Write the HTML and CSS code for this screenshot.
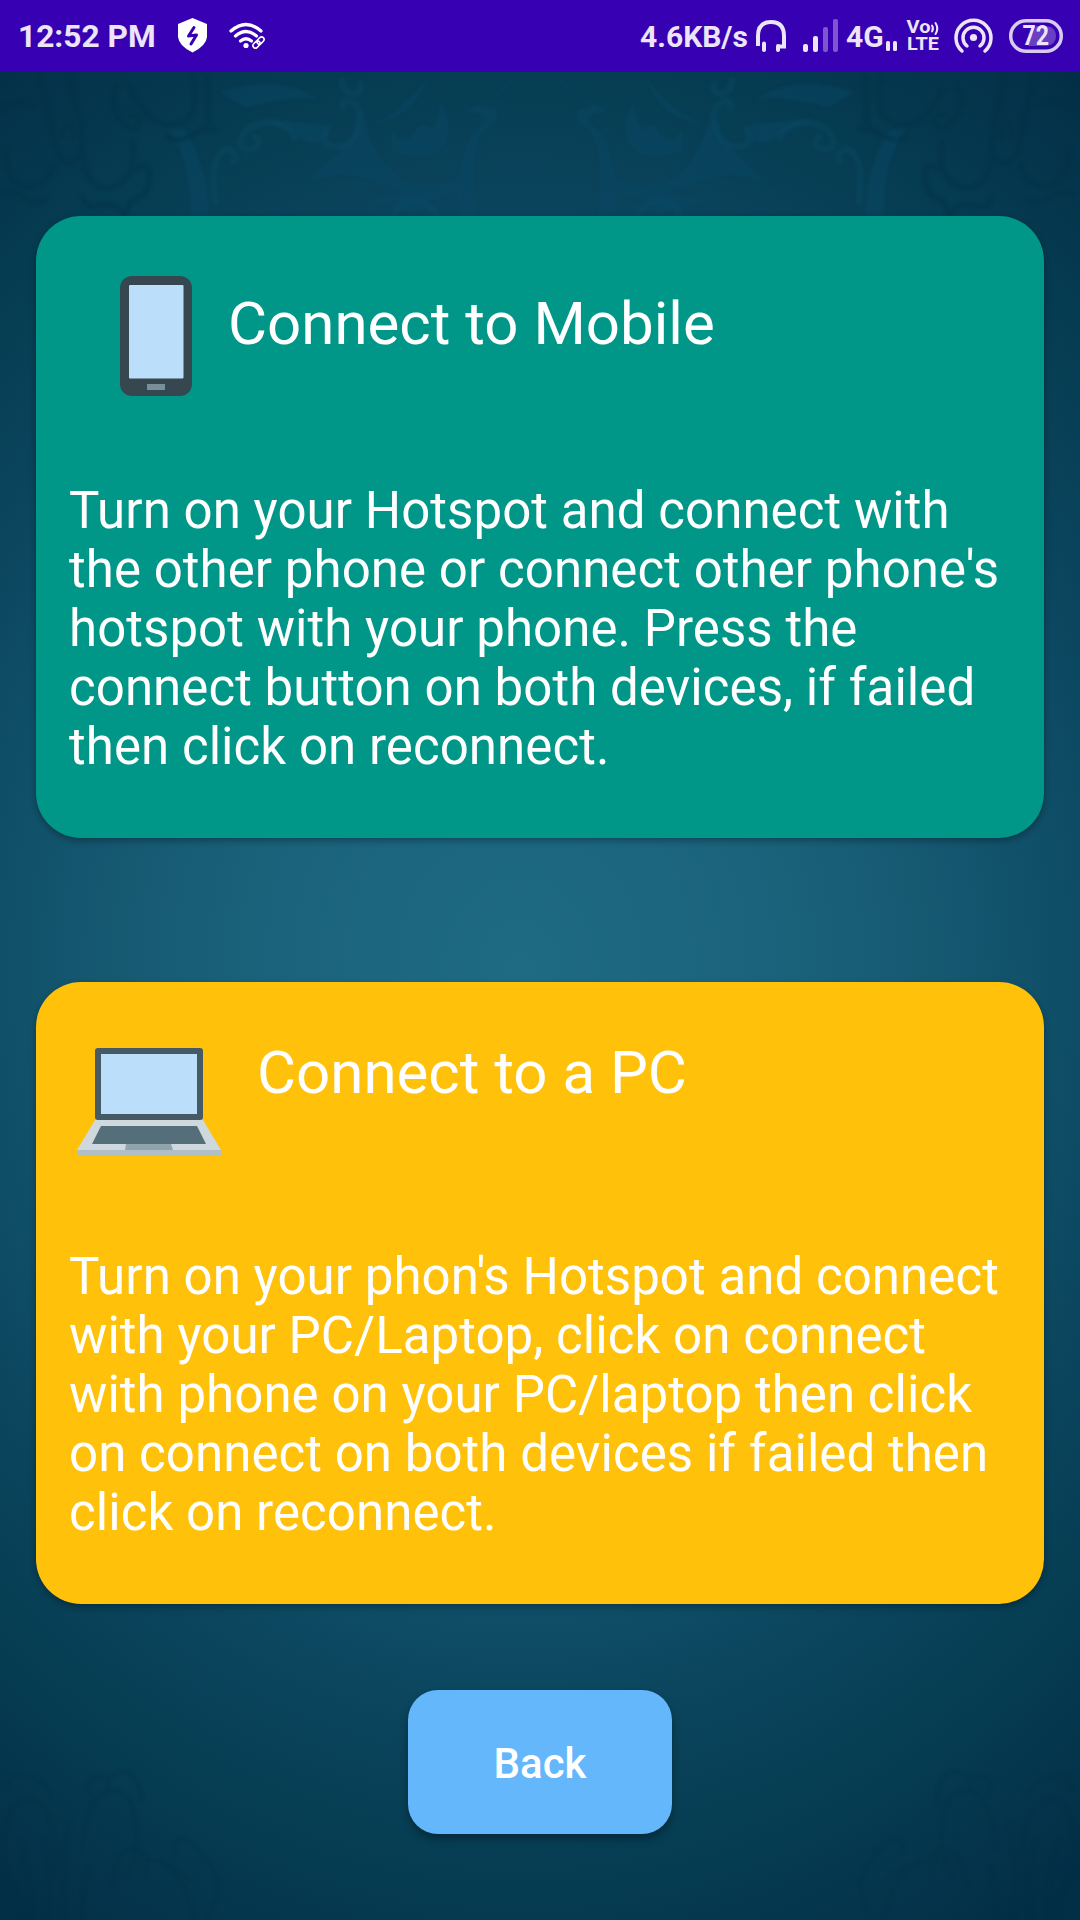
FILE: index.html
```html
<!DOCTYPE html>
<html lang="en">
<head>
<meta charset="utf-8">
<meta name="viewport" content="width=device-width, initial-scale=1">
<title>Connect</title>
<link rel="stylesheet" href="styles.css">
</head>
<body>
<svg class="ornament" viewBox="0 0 1080 1920" aria-hidden="true">
  <defs>
    <g id="flourish">
      <g class="leaf">
        <path d="M430 75q-18 45-60 50q30-10 60-50zM520 72q-30 35-58 38q35 5 20 16q-24 12-24 94h18q-8-70 8-90q18-14 12-20q-14-4-20-6q30-8 44-32z"/>
        <path d="M220 92q60-20 100 9q-24-8-74 7zM262 118q40 5 70 8q-10 20-25 16M300 187q60-44 62-78q8 50 44 74q40 10 66-14q-6 30-50 27q-30-8-64-20q-30-6-58 11z"/>
        <path d="M392 128q10 24 24 4q6-14 16-1q8-14 8-30q18 32-2 50q-20 10-46-1zM365 201q60-14 75-2q-22-2-24 21q-10-14-51-19zM185 130q28 50 22 90h-18q6-50-20-90z"/>
      </g>
      <g class="curl">
        <path d="M240 145q2-22 30-22q26 4 24 18M240 145q8 10 18 0q2-8-6-9M342 78q0 16 12 16q10-3 5-13M345 110q-6-8 3-9q16 4 10 24q-2 20-20 22q-22-2-10-17M216 205q-8-52 12-56q14 8 3 14M396 220q-4-18 20-18q20 3 22 18"/>
      </g>
      <g class="shade">
        <path d="M130 85q14 38 40 40q34-2 22-50M118 85q-12 22 4 36q12 14 18-1q-2-7-12-4M5 145q0 40 22 42q22-1 27-24M82 120q-6 70 28 68q28-7 22-48M52 120q2 30 10 40q10 8 16-4M62 138q0-12 8-14q8 6 2 17M166 135q12 12 38-7q9 3 12 0M83 195q0 12 12 12q20-8 30 8l6-14q22-6 18-32q-8-8-14 2M0 193q14-4 24 4q14 10 22 1M208 75v50M0 110q20-14 35-5M40 75q8 40 14 62M70 75q2 30 12 48"/>
      </g>
    </g>
    <g id="paisley" class="shade">
      <path d="M5 1880q-8-76 22-82q26 5 28 50q2 30-8 46M82 1850q4-60 34-60q24 6 20 60q-3 20-12 28M5 1790q6-18 18-15q24 4 30 25M88 1795q-2-20 12-18q14 2 6 14M110 1777q26-18 32 24M112 1890q0-40 24-42q16 6 10 28M140 1860q22-2 50 20M20 1840q12 40 10 80M42 1840q12 38 5 80M70 1820q-10 40-5 100M150 1860q30 0 45 60M176 1855q-4-16 8-16q18 8 34 42q0 20-10 39M0 1860q20 30 20 60M90 1865q-10 26-8 55"/>
    </g>
  </defs>
  <use href="#flourish"/>
  <use href="#flourish" transform="translate(1074 0) scale(-1 1)"/>
  <use href="#paisley"/>
  <use href="#paisley" transform="translate(1078 0) scale(-1 1)"/>
</svg>

<header class="status">
  <span class="status-text clock">12:52 PM</span>
  <svg class="shield" width="30" height="36" viewBox="177 17 30 36">
    <path class="solid" d="M192.500 18L207 24V37Q206 46 192.500 52.500Q179 46 178 37V24z"/>
    <path class="bolt" d="M194 27.500L188.500 36L196.500 35L191 44"/>
  </svg>
  <svg class="wifi" width="37" height="28" viewBox="229 22 37 28">
    <g class="wifi-line"><path d="M231 31Q246 18 261 31"/><path d="M235.500 36Q246 27 256.500 36"/><path d="M240.500 41Q246 36.500 251.500 41"/></g>
    <circle class="solid" cx="246" cy="45.500" r="2.600"/>
    <g class="link"><rect x="252.500" y="42" width="8" height="5" rx="2.500" transform="rotate(-45 256.500 44.500)"/><rect x="256.500" y="38" width="8" height="5" rx="2.500" transform="rotate(-45 260.500 40.500)"/></g>
  </svg>
  <span class="status-text speed">4.6KB/s</span>
  <svg class="headset" width="32" height="36" viewBox="755 18 32 36">
    <path class="line" d="M758 46V36Q758 22 771 22T784 36V46.500H778"/>
    <path class="line" d="M764 43.500V50M778 46V50" stroke-linecap="round"/>
  </svg>
  <svg class="signal" width="38" height="36" viewBox="802 18 38 36">
    <rect class="tint" x="803" y="44" width="5" height="8" rx="2"/><rect class="tint" x="813" y="36" width="5" height="16" rx="2"/><rect class="dim" x="823" y="27" width="5" height="25" rx="2"/><rect class="dim" x="833" y="19" width="5" height="33" rx="2"/>
  </svg>
  <span class="status-text network">4G</span>
  <svg class="data" width="12" height="12" viewBox="886 40 12 12"><rect class="tint" x="886" y="41" width="4" height="10" rx="1.500"/><rect class="tint" x="893" y="41" width="4" height="10" rx="1.500"/></svg>
  <svg class="volte" width="34" height="34" viewBox="906 19 34 34">
    <text class="volte-text" x="906.500" y="33" textLength="24" lengthAdjust="spacingAndGlyphs">Vo</text>
    <text class="volte-text" x="907" y="49.700" textLength="32" lengthAdjust="spacingAndGlyphs">LTE</text>
    <path class="wave" d="M932 25.500Q934 28.500 932 31.500M935.500 23Q939 28.500 935.500 34"/>
  </svg>
  <svg class="hotspot" width="40" height="36" viewBox="953 17 40 36">
    <circle class="tint" cx="973.500" cy="37.500" r="3.600"/>
    <path class="arc" d="M967 46A10.500 10.500 0 1 1 980 46M962 51A17.500 17.500 0 1 1 985 51"/>
  </svg>
  <svg class="battery" width="56" height="36" viewBox="1008 18 56 36">
    <path class="charge" d="M1036 26H1046Q1056 27 1056 36T1046 46H1028z"/>
    <rect class="battery-case" x="1010.700" y="20.700" width="50.600" height="30.600" rx="15.300"/>
    <text class="battery-text" x="1022.500" y="45.300" textLength="26.500" lengthAdjust="spacingAndGlyphs">72</text>
  </svg>
</header>

<main class="screen">
  <section class="card mobile">
    <div class="card-head">
      <svg class="phone" width="72" height="120" viewBox="0 0 72 120">
        <rect width="72" height="120" rx="12" fill="#37474f"/><rect x="9" y="9" width="54.500" height="93.500" rx="1" fill="#bbdefb"/><rect x="27" y="108" width="18" height="6" fill="#78909c"/>
      </svg>
      <h1 class="card-title">Connect to Mobile</h1>
    </div>
    <p class="card-copy">Turn on your Hotspot and connect with<br>the other phone or connect other phone's<br>hotspot with your phone. Press the<br>connect button on both devices, if failed<br>then click on reconnect.</p>
  </section>
  <section class="card pc">
    <div class="card-head">
      <svg class="laptop" width="144" height="108" viewBox="0 0 144 108">
        <path d="M18 72H126L144 102H0z" fill="#cfd8dc"/><rect x="18" width="108" height="72" rx="3" fill="#455a64"/><rect x="24" y="6" width="96" height="60" fill="#bbdefb"/><path d="M24 78H120L129 96H15z" fill="#546e7a"/><path d="M49 96H94L96 102H48z" fill="#90a4ae"/><rect y="102" width="144" height="6" fill="#b0bec5"/>
      </svg>
      <h1 class="card-title">Connect to a PC</h1>
    </div>
    <p class="card-copy">Turn on your phon's Hotspot and connect<br>with your PC/Laptop, click on connect<br>with phone on your PC/laptop then click<br>on connect on both devices if failed then<br>click on reconnect.</p>
  </section>
  <button class="back" type="button">Back</button>
</main>
</body>
</html>
```
FILE: styles.css
```css
* { box-sizing: border-box; }

body {
  margin: 0;
  width: 1080px;
  height: 1920px;
  overflow: hidden;
  position: relative;
  font-family: Roboto, "Liberation Sans", sans-serif;
  color: #fff;
  background: radial-gradient(ellipse 950px 1125px at 520px 970px, #1f6b84 0%, #1b637c 25%, #165a72 42%, #0f4e67 57%, #0a445c 68%, #063d53 80%, #04344b 92%, #022e46 100%);
}

.ornament { position: absolute; inset: 0; width: 1080px; height: 1920px; filter: blur(1.5px); }
.leaf { fill: #0b4966; opacity: .42; }
.curl { fill: none; stroke: #0b4c66; stroke-width: 6; opacity: .38; }
.shade { fill: none; stroke: #032f45; stroke-width: 5; opacity: .42; }
#paisley { stroke-width: 3; opacity: .35; }

.status {
  position: relative;
  display: flex;
  align-items: flex-start;
  height: 72px;
  background: #3700b3;
}
.status svg { flex: none; display: block; overflow: visible; }
.status-text {
  flex: none;
  height: 38px;
  margin-top: 18px;
  font-size: 31.700px;
  font-weight: 700;
  line-height: 38px;
  color: #ebe5f7;
  white-space: nowrap;
}
.clock { width: 159px; padding-left: 18px; }
.shield { margin: 17px 0 0 18px; }
.wifi { margin: 22px 0 0 22px; }
.speed { width: 115px; margin-left: 374px; font-size: 30px; }
.headset { margin: 18px 0 0; }
.signal { margin: 18px 0 0 15px; }
.network { width: 40px; margin-left: 6px; font-size: 30px; }
.data { margin: 40px 0 0; }
.volte { margin: 19px 0 0 8px; }
.hotspot { margin: 17px 0 0 13px; }
.battery { margin: 18px 0 0 15px; }

.solid { fill: #fff; }
.tint { fill: #ebe5f7; }
.dim { fill: #8055cd; }
.bolt { fill: none; stroke: #3700b3; stroke-width: 3; stroke-linejoin: round; stroke-linecap: round; }
.wifi-line { fill: none; stroke: #fff; stroke-width: 3.200; stroke-linecap: round; }
.link { fill: none; stroke: #fff; stroke-width: 1.600; }
.line { fill: none; stroke: #ebe5f7; stroke-width: 4; }
.arc { fill: none; stroke: #ebe5f7; stroke-width: 3.500; stroke-linecap: round; }
.wave { fill: none; stroke: #ebe5f7; stroke-width: 2; stroke-linecap: round; }
.volte-text { fill: #ebe5f7; font-size: 17.500px; font-weight: 700; }
.charge { fill: #693fc4; }
.battery-case { fill: none; stroke: #d7ccf0; stroke-width: 3.500; }
.battery-text { fill: #ebe5f7; font-size: 27px; font-weight: 700; }

.screen {
  position: relative;
  display: flex;
  flex-direction: column;
  align-items: center;
  padding-top: 144px;
}
.card {
  width: 1008px;
  height: 622px;
  margin-bottom: 144px;
  padding: 0 33px;
  border-radius: 45px;
  box-shadow: 0 3px 7px rgba(0, 0, 0, .3);
}
.card.mobile { background: #009788; }
.card.pc { background: #ffc10a; margin-bottom: 86px; }
.card-head { display: flex; align-items: flex-start; height: 265px; }
.phone { margin: 60px 36px 0 51px; }
.laptop { margin: 66px 36px 0 8px; }
.card-title {
  margin: 73px 0 0;
  font-size: 60px;
  font-weight: 400;
  line-height: 70px;
  white-space: nowrap;
}
.pc .card-title { margin-top: 56px; }
.card-copy {
  margin: 0;
  font-size: 51px;
  line-height: 59px;
  letter-spacing: .055px;
  white-space: nowrap;
}
.back {
  width: 264px;
  height: 144px;
  padding: 2px 0 0;
  border: 0;
  border-radius: 30px;
  background: #64b7fb;
  box-shadow: 0 5px 9px rgba(0, 0, 0, .32);
  color: #fff;
  font: 500 42px Roboto, "Liberation Sans", sans-serif;
}
```
